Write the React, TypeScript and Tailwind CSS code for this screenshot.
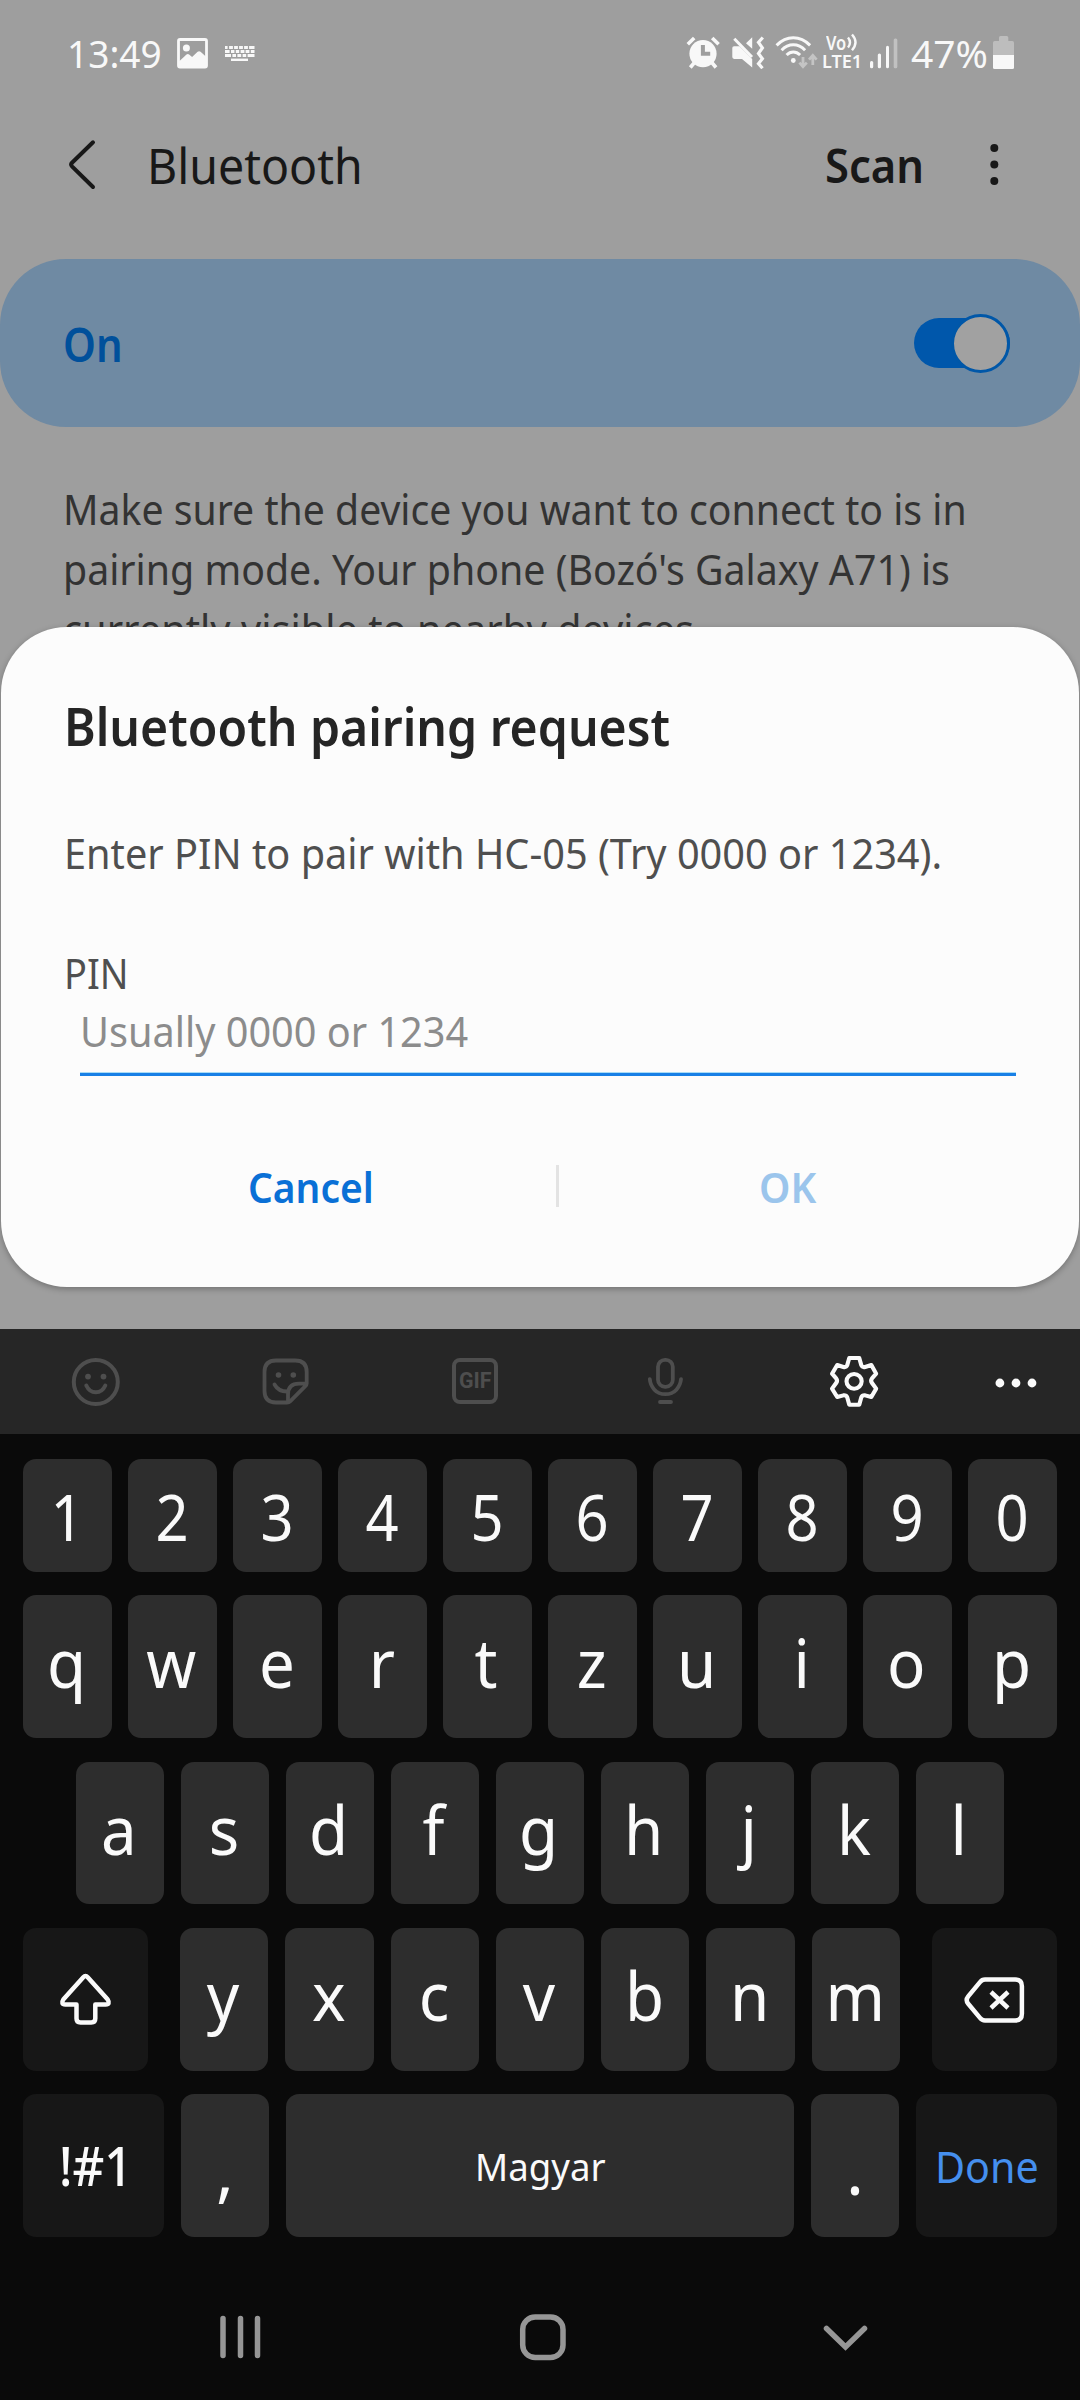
import { useLayoutEffect, useRef, useState } from "react";
import type { ReactNode } from "react";

/** Single-line text condensed or widened horizontally to an exact width. */
function FitText({ width, className = "", children }: { width: number; className?: string; children: ReactNode }) {
  const ref = useRef<HTMLSpanElement>(null);
  const [scale, setScale] = useState(1);
  useLayoutEffect(() => {
    if (ref.current) setScale(width / ref.current.offsetWidth);
  }, [width]);
  return (
    <span className={`block shrink-0 whitespace-nowrap ${className}`} style={{ width }}>
      <span ref={ref} className="inline-block origin-left" style={{ transform: `scaleX(${scale})` }}>
        {children}
      </span>
    </span>
  );
}

function StatusBar() {
  return (
    <div className="flex h-[105px] items-start pt-[36px] pl-[67px] text-[#f8f8f8]">
      <FitText width={95} className="h-[33px] text-[39px] leading-[34px]">13:49</FitText>
      <svg className="ml-[14px] h-[33px] w-[33px]" viewBox="176 36 33 33">
        <rect x="178.5" y="39.5" width="28" height="27.5" rx="1.5" fill="none" stroke="#f8f8f8" strokeWidth="2.8" />
        <circle cx="186.4" cy="48" r="3.5" fill="#f8f8f8" />
        <path d="M179 61.5l7.5-7q1.3-1 2.6 0l3 2.6 5.5-5.3q1.5-1.3 3 0l6 5.4V67H179z" fill="#f8f8f8" />
      </svg>
      <svg className="ml-[15px] h-[33px] w-[32px]" viewBox="224 36 32 33" fill="none" stroke="#f8f8f8">
        <path d="M225 47.5h29.5" strokeWidth="3" strokeDasharray="2.6 1.5 3.8 1.2 3.8 1.2 3.8 1.2 3.8 1.2 5.4" />
        <path d="M225 51.5h29.5" strokeWidth="2.8" strokeDasharray="4.6 1.4 3.4 1.4 3.4 1.4 3.8 1.2 3.8 1.4 3.7" />
        <path d="M225 55.5h29.5" strokeWidth="3" strokeDasharray="6 1.4 3.6 1.4 3.8 1.4 3.6 1.4 6.9" />
        <path d="M231 59.8h17" strokeWidth="2.4" />
      </svg>
      <svg className="ml-[430px] h-[33px] w-[34px]" viewBox="686 36 34 33" fill="none" stroke="#f8f8f8">
        <circle cx="703" cy="53.7" r="13.6" fill="#f8f8f8" stroke="none" />
        <path d="M687.8 44.2l6.4-6.2M718.6 44.2l-6.4-6.2M694.5 62.5l-4.2 5M711.8 62.5l4.2 5" strokeWidth="3.6" />
        <path d="M702.9 45v8.8h7.3" stroke="#9e9e9e" strokeWidth="4" />
      </svg>
      <svg className="ml-[11px] h-[33px] w-[34px]" viewBox="731 36 34 33" fill="#f8f8f8">
        <path d="M732.3 48q0-1.8 1.8-1.8h5.4L752.2 59v8.6L742 58.9h-7.9q-1.8 0-1.8-1.8zM746 43.2l6.2-6v11.6z" />
        <path d="M734.3 38.8L752 57" stroke="#f8f8f8" strokeWidth="3" />
        <path d="M762.8 37.5l-4.3 4.8 3.9 5.6-3.9 5.5 3.9 5.3-3.9 4.9 4 4.6" fill="none" stroke="#f8f8f8" strokeWidth="3.2" />
      </svg>
      <svg className="ml-[10px] h-[33px] w-[43px]" viewBox="775 36 43 33" fill="none" stroke="#f8f8f8" strokeWidth="3">
        <path d="M776.6 45.4q7.4-7.6 16.7-7.6t16.8 7.6M781.6 50.2q5.1-5.5 11.7-5.5t11.8 5.5M786.6 55q3-3 6.7-3t6.8 3" />
        <circle cx="793.3" cy="60.5" r="2.4" fill="#f8f8f8" stroke="none" />
        <path d="M803 57v9M799.4 62.6l3.6 4 3.8-4M812.8 65v-9M809 59.6l3.8-4.2 3.8 4.2" stroke="#c4c4c4" strokeWidth="2.8" />
      </svg>
      <div className="ml-[4px] w-[41px] font-semibold">
        <div className="flex h-[14px] items-center pl-[4px] leading-[14px]">
          <FitText width={20} className="text-[19px]">Vo</FitText>
          <svg className="h-[20px] w-[14px]" viewBox="846 36 14 20" fill="none" stroke="#f8f8f8" strokeWidth="2.4">
            <path d="M848 40.500q4 5 0 10M852 37.500q7 7.800 0 15.800" />
          </svg>
        </div>
        <FitText width={40} className="text-[18.500px] leading-[22px]">LTE1</FitText>
      </div>
      <svg className="ml-[6px] h-[33px] w-[29px]" viewBox="869 36 29 33" fill="#f8f8f8">
        <rect x="870" y="61" width="3.2" height="7.3" rx="1.5" />
        <rect x="877.8" y="53.5" width="3.2" height="14.8" rx="1.5" />
        <rect x="886" y="45.7" width="3" height="22.6" rx="1.5" />
        <rect x="893.7" y="38.5" width="3.6" height="29.8" rx="1.5" fill="#c1c1c1" />
      </svg>
      <FitText width={77} className="ml-[13px] h-[33px] text-[39px] leading-[34px]">47%</FitText>
      <svg className="ml-[4px] h-[34px] w-[22px]" viewBox="992 36 22 34">
        <path d="M999 41v-3.500q0-1.500 1.500-1.500h6.300q1.500 0 1.500 1.500V41h4q1.700 0 1.700 1.700V56h-21V42.700q0-1.700 1.700-1.700z" fill="#bdbdbd" />
        <path d="M993 55h21v12.500q0 1.500-1.500 1.500h-18q-1.500 0-1.500-1.500z" fill="#f8f8f8" />
      </svg>
    </div>
  );
}

function SettingsPage() {
  return (
    <div className="text-[#333333]">
      <StatusBar />
      <header className="flex h-[154px] items-start text-[#181818]">
        <svg className="mt-[30px] ml-[66px] h-[60px] w-[34px]" viewBox="66 135 34 60" fill="none" stroke="#181818" strokeWidth="4" strokeLinecap="round">
          <path d="M93 142.300L72 162.700q-1.700 1.800 0 3.600L93 187" />
        </svg>
        <FitText width={216} className="ml-[47px] text-[49.500px] leading-[121px]">Bluetooth</FitText>
        <FitText width={99} className="ml-[462px] text-[47.500px] leading-[120px] font-semibold">Scan</FitText>
        <svg className="mt-[35px] ml-[61px] h-[50px] w-[18px]" viewBox="985 140 18 50" fill="#181818">
          <circle cx="994.300" cy="148" r="4" />
          <circle cx="994.300" cy="164.500" r="4" />
          <circle cx="994.300" cy="181" r="4" />
        </svg>
      </header>
      <section className="flex h-[168px] items-center justify-between rounded-[66px] bg-[#6f8aa3] pr-[70px] pl-[63px]">
        <FitText width={60} className="pt-[1px] text-[46px] leading-[60px] font-semibold text-[#00509b]">On</FitText>
        <div className="flex h-[50px] w-[96px] items-center justify-end rounded-full bg-[#0057ab]">
          <div className="size-[59px] shrink-0 rounded-full border-[3px] border-[#0057a8] bg-[#a1a1a1]" />
        </div>
      </section>
      <div className="pt-[52px] pl-[62.500px] text-[42px] leading-[60px]">
        <FitText width={904}>Make sure the device you want to connect to is in</FitText>
        <FitText width={887}>{"pairing mode. Your phone (Bozó's Galaxy A71) is"}</FitText>
        <FitText width={642}>currently visible to nearby devices.</FitText>
      </div>
    </div>
  );
}

function PairingDialog() {
  return (
    <div className="absolute top-[627px] right-px left-px h-[660px] rounded-[66px] bg-[#fcfcfc] pt-[66px] pl-[63px] text-[42px] text-[#4f4f4f] shadow-[0_2px_6px_rgba(0,0,0,0.28)]">
      <FitText width={606} className="text-[52.500px] leading-[66px] font-semibold text-[#252525]">Bluetooth pairing request</FitText>
      <FitText width={878} className="pt-[64px] leading-[60px]">Enter PIN to pair with HC-05 (Try 0000 or 1234).</FitText>
      <FitText width={65} className="pt-[60px] leading-[60px]">PIN</FitText>
      <div className="ml-[16px] h-[73px] w-[936px] border-b-[3px] border-[#1880e6] text-[#8c8c8c]">
        <div className="h-full border-b border-[#a9dcf6]">
          <FitText width={388} className="leading-[55px]">Usually 0000 or 1234</FitText>
        </div>
      </div>
      <div className="mt-[80px] ml-[-63px] flex h-[64px] items-center font-semibold">
        <FitText width={126} className="mb-[3px] ml-[247px] text-[#0a70d6]">Cancel</FitText>
        <div className="mb-[4px] ml-[182px] h-[42px] w-[3px] bg-[#e3e3e3]" />
        <FitText width={57} className="mb-[3px] ml-[200px] text-[#9bc5ec]">OK</FitText>
      </div>
    </div>
  );
}

function Toolbar() {
  return (
    <div className="flex h-[105px] items-center bg-[#262626]">
      <svg className="ml-[69px] h-[54px] w-[54px]" viewBox="69 1355 54 54" fill="none" stroke="#4e4e4e" strokeWidth="4" strokeLinecap="round">
        <circle cx="95.800" cy="1382" r="22" />
        <path d="M86.300 1385.500q3 6.700 9.500 6.700t9.500-6.700" />
        <circle cx="88" cy="1376.600" r="2.900" fill="#4e4e4e" stroke="none" />
        <circle cx="103.500" cy="1376.600" r="2.900" fill="#4e4e4e" stroke="none" />
      </svg>
      <svg className="ml-[136px] h-[54px] w-[54px]" viewBox="259 1355 54 54" fill="none" stroke="#4e4e4e" strokeWidth="3.800" strokeLinecap="round" strokeLinejoin="round">
        <path d="M306.700 1383.500V1372q0-11.500-11.500-11.500H276q-11.500 0-11.500 11.500v19q0 11.500 11.500 11.500h11q2 0 3.400-1.400l14.900-15q1.400-1.300 1.400-2.600zM306.500 1383.700H299q-11 0-11 11v7.500" />
        <path d="M274.500 1384.500q4 7.300 13.300 7" />
        <circle cx="278.500" cy="1375" r="2.800" fill="#4e4e4e" stroke="none" />
        <circle cx="293.300" cy="1375" r="2.800" fill="#4e4e4e" stroke="none" />
      </svg>
      <div className="mb-[1px] ml-[139px] flex h-[46px] w-[46px] items-center justify-center rounded-[8px] border-4 border-[#4e4e4e]">
        <FitText width={33} className="font-[Roboto] text-[22px] leading-[24px] font-bold text-[#4e4e4e]">GIF</FitText>
      </div>
      <svg className="ml-[140px] h-[54px] w-[54px]" viewBox="638 1355 54 54" fill="none" stroke="#4e4e4e" strokeWidth="3.800" strokeLinecap="round">
        <rect x="658" y="1359.800" width="14.800" height="27" rx="7" />
        <path d="M649.800 1379.200q.5 6 4.600 10.500t11 4.500 11-4.500 4.600-10.500M660 1402h11" />
      </svg>
      <svg className="ml-[135px] h-[54px] w-[54px]" viewBox="827 1355 54 54" fill="none" stroke="#fafafa" strokeLinejoin="round">
        <g transform="translate(540 1320) scale(.3444 .3333)" strokeWidth="12">
          <path d="M898 114h29l6 22q3 7 11 5l18-6 14 26-12 14q-5 7 0 14l12 17-14 25-18-5q-8-1-11 6l-6 22h-29l-6-22q-3-7-11-6l-18 5-15-25 12-17q5-7 0-14l-12-14 15-26 18 6q8 2 11-5z" />
          <circle cx="912" cy="184" r="22" />
        </g>
      </svg>
      <svg className="ml-[109px] h-[54px] w-[54px]" viewBox="990 1355 54 54" fill="#fafafa">
        <circle cx="999.900" cy="1383" r="4.400" />
        <circle cx="1016" cy="1383" r="4.400" />
        <circle cx="1032" cy="1383" r="4.400" />
      </svg>
    </div>
  );
}

function Key({ children, className = "" }: { children: ReactNode; className?: string }) {
  return (
    <div className={`flex items-center justify-center rounded-[13px] ${className}`}>{children}</div>
  );
}

const light = "bg-[#2d2d2d]";
const dark = "bg-[#171717]";

function LetterKey({ char, className }: { char: string; className: string }) {
  return (
    <Key className={`${light} ${className}`}>
      <span className="-translate-x-[1px] -translate-y-[4px] scale-x-[.95] text-[67px] leading-none">{char}</span>
    </Key>
  );
}

function Keyboard() {
  return (
    <div className="h-[1071px] bg-[#0a0a0a] text-[#fafafa]">
      <Toolbar />
      <div className="mt-[25px] flex h-[113px] gap-[16px] px-[23px]">
        {[..."1234567890"].map((c) => (
          <Key key={c} className={`flex-1 ${light}`}>
            <span className="translate-y-[1px] scale-x-[.92] text-[63px] leading-none">{c}</span>
          </Key>
        ))}
      </div>
      <div className="mt-[23px] flex h-[143px] gap-[16px] px-[23px]">
        {[..."qwertzuiop"].map((c) => <LetterKey key={c} char={c} className="flex-1" />)}
      </div>
      <div className="mt-[24px] flex h-[142px] gap-[17px] px-[76px]">
        {[..."asdfghjkl"].map((c) => <LetterKey key={c} char={c} className="flex-1" />)}
      </div>
      <div className="mt-[24px] flex h-[143px] justify-between px-[23px]">
        <Key className={`w-[125px] ${dark}`}>
          <svg className="h-[60px] w-[60px]" viewBox="56 1970 60 60" fill="none" stroke="#fafafa" strokeWidth="4.500" strokeLinejoin="round">
            <path d="M83.300 1977.300q2.200-2.500 4.400 0l19.800 22q3.200 5-2 5.200H95.300V2018.500q0 4-4 4H80.500q-4 0-4-4v-14H65.500q-5.200-.2-2-5.200z" />
          </svg>
        </Key>
        <div className="flex w-[720px] gap-[17px]">
          {[..."yxcvbnm"].map((c) => <LetterKey key={c} char={c} className="flex-1" />)}
        </div>
        <Key className={`w-[125px] ${dark}`}>
          <svg className="h-[60px] w-[64px]" viewBox="963 1969.500 64 60" fill="none" stroke="#fafafa" strokeWidth="4.500" strokeLinejoin="round">
            <path d="M985 1979h30.200q6.700 0 6.700 6.700v27.600q0 6.700-6.700 6.700h-30.200q-3 0-5-2.600l-11.800-14.200q-3-3.700 0-7.400l11.800-14.200q2-2.600 5-2.600zM991 1991.500l17 16M1008 1991.500l-17 16" />
          </svg>
        </Key>
      </div>
      <div className="mt-[23px] flex h-[143px] gap-[17px] px-[23px]">
        <Key className={`w-[141px] ${dark}`}>
          <FitText width={74} className="mb-[2px] ml-[4px] text-[54px] leading-none font-medium">!#1</FitText>
        </Key>
        <Key className={`w-[88px] ${light}`}>
          <span className="translate-y-[4px] text-[67px] leading-none">,</span>
        </Key>
        <Key className={`w-[508px] ${light}`}>
          <FitText width={131} className="ml-px text-[38px] leading-none">Magyar</FitText>
        </Key>
        <Key className={`w-[88px] ${light}`}>
          <span className="translate-y-[4px] text-[67px] leading-none">.</span>
        </Key>
        <Key className={`w-[141px] ${dark}`}>
          <FitText width={104} className="text-[44px] leading-none text-[#458fee]">Done</FitText>
        </Key>
      </div>
      <nav className="mt-[70px] flex h-[60px]">
        <svg className="ml-[210px] h-[60px] w-[60px]" viewBox="210 2307 60 60" stroke="#969696" strokeWidth="5.500" strokeLinecap="round">
          <path d="M223 2318.500v37M240.500 2318.500v37M257.500 2318.500v37" />
        </svg>
        <svg className="ml-[243px] h-[60px] w-[60px]" viewBox="513 2307 60 60" fill="none" stroke="#969696" strokeWidth="5.500">
          <rect x="522.700" y="2317" width="40.300" height="40.500" rx="12.500" />
        </svg>
        <svg className="ml-[242px] h-[60px] w-[60px]" viewBox="815 2307 60 60" fill="none" stroke="#969696" strokeWidth="5.500" strokeLinecap="round">
          <path d="M826.500 2328.500l19 18.500 19-18.500" />
        </svg>
      </nav>
    </div>
  );
}

export default function App() {
  return (
    <div className="h-[2400px] w-[1080px] overflow-hidden font-['Noto_Sans',sans-serif]">
      <div className="relative h-[1329px] overflow-hidden bg-[#9e9e9e]">
        <SettingsPage />
        <PairingDialog />
      </div>
      <Keyboard />
    </div>
  );
}
